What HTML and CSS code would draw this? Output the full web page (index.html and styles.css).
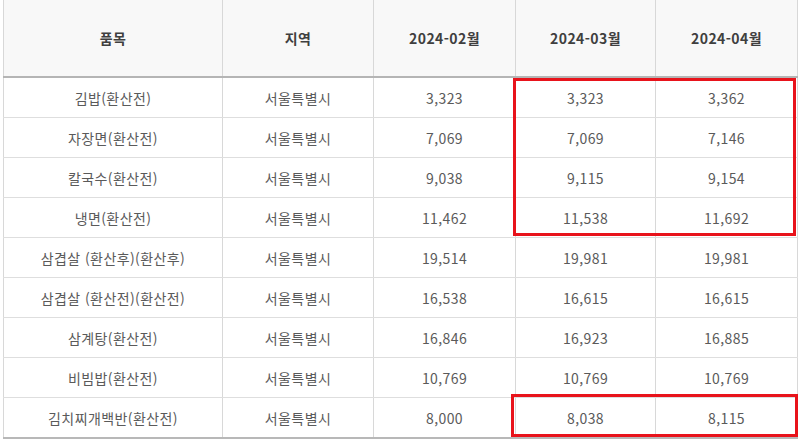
FILE: index.html
```html
<!DOCTYPE html>
<html lang="ko">
<head>
<meta charset="utf-8">
<link rel="stylesheet" href="styles.css">
</head>
<body>
<div class="wrap">
  <table class="price">
    <colgroup>
      <col class="c1"><col class="c2"><col class="c3"><col class="c4"><col class="c5">
    </colgroup>
    <thead>
      <tr><th>품목</th><th>지역</th><th>2024-02월</th><th>2024-03월</th><th>2024-04월</th></tr>
    </thead>
    <tbody>
      <tr><td>김밥(환산전)</td><td>서울특별시</td><td>3,323</td><td>3,323</td><td>3,362</td></tr>
      <tr><td>자장면(환산전)</td><td>서울특별시</td><td>7,069</td><td>7,069</td><td>7,146</td></tr>
      <tr><td>칼국수(환산전)</td><td>서울특별시</td><td>9,038</td><td>9,115</td><td>9,154</td></tr>
      <tr><td>냉면(환산전)</td><td>서울특별시</td><td>11,462</td><td>11,538</td><td>11,692</td></tr>
      <tr><td>삼겹살 (환산후)(환산후)</td><td>서울특별시</td><td>19,514</td><td>19,981</td><td>19,981</td></tr>
      <tr><td>삼겹살 (환산전)(환산전)</td><td>서울특별시</td><td>16,538</td><td>16,615</td><td>16,615</td></tr>
      <tr><td>삼계탕(환산전)</td><td>서울특별시</td><td>16,846</td><td>16,923</td><td>16,885</td></tr>
      <tr><td>비빔밥(환산전)</td><td>서울특별시</td><td>10,769</td><td>10,769</td><td>10,769</td></tr>
      <tr><td>김치찌개백반(환산전)</td><td>서울특별시</td><td>8,000</td><td>8,038</td><td>8,115</td></tr>
    </tbody>
  </table>
  <div class="mark mark-a"></div>
  <div class="mark mark-b"></div>
</div>
</body>
</html>
```
FILE: styles.css
```css
html, body {
  margin: 0;
  padding: 0;
  background: #fff;
}
body {
  font-family: "Noto Sans CJK KR", "Noto Sans", sans-serif;
  color: #5a5a5a;
}
.wrap {
  position: relative;
  width: 800px;
  height: 442px;
  padding-left: 3px;
  box-sizing: border-box;
}
.price {
  border-collapse: collapse;
  table-layout: fixed;
  width: 794px;
}
.c1 { width: 219px; }
.c2 { width: 151px; }
.c3 { width: 142px; }
.c4 { width: 140px; }
.c5 { width: 142px; }
.price th, .price td {
  border-left: 1px solid #d8d8d8;
  border-right: 1px solid #d8d8d8;
  text-align: center;
  padding: 0;
  font-size: 14px;
  letter-spacing: 0.4px;
}
.price th {
  height: 76px;
  background: #f8f8f8;
  color: #3f3f3f;
  font-weight: 700;
  border-bottom: 2px solid #b5b5b5;
}
.price td {
  height: 39px;
  border-bottom: 1px solid #dedede;
  font-weight: 400;
}
.price tbody tr:last-child td {
  border-bottom: 2px solid #b8b8b8;
}
.mark {
  position: absolute;
  border: 3px solid #e8131b;
  box-sizing: border-box;
}
.mark-a {
  left: 513px;
  top: 78px;
  width: 283px;
  height: 158px;
}
.mark-b {
  left: 511px;
  top: 394px;
  width: 287px;
  height: 43px;
}
```
